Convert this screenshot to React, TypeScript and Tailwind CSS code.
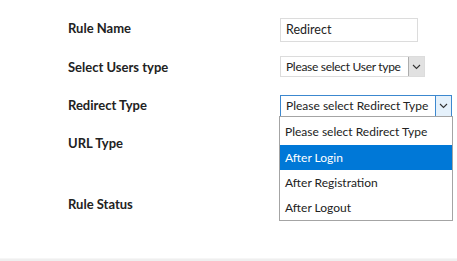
import React from "react";

const options = ["Please select Redirect Type", "After Login", "After Registration", "After Logout"];

function Chevron() {
  return (
    <svg width="9" height="6" viewBox="0 0 9 6" fill="none">
      <path d="M1 1l3.5 3.5L8 1" stroke="#333" strokeWidth="1.1" />
    </svg>
  );
}

export default function App() {
  return (
    <div
      className="relative w-[457px] h-[261px] bg-white text-[13px] text-[#222]"
      style={{ fontFamily: "Lato, 'Noto Sans', sans-serif" }}
    >
      <div className="flex flex-col pt-[18px] pl-[68px]">
        {/* Rule Name */}
        <div className="flex h-[24px]">
          <div className="w-[212px] pt-[1px] font-bold text-[13px] leading-[18px]">Rule Name</div>
          <div className="w-[138px] h-[24px] border border-[#dcdcdc] px-[5px] text-[12.5px] leading-[22px]">
            Redirect
          </div>
        </div>

        {/* Select Users type */}
        <div className="flex h-[20px] mt-[14px]">
          <div className="w-[212px] pt-[2px] font-bold leading-[18px]">Select Users type</div>
          <div className="flex w-[145px] h-[21px] border border-[#dcdcdc] pl-[5px]">
            <span className="flex-1 whitespace-nowrap text-[12px] tracking-[-0.3px] leading-[19px]">
              Please select User type
            </span>
            <span className="flex items-center justify-center w-[16px] h-[19px] bg-[#e1e1e1] border-l border-[#adadad]">
              <Chevron />
            </span>
          </div>
        </div>

        {/* Redirect Type */}
        <div className="flex h-[21px] mt-[19px]">
          <div className="w-[212px] pt-[1px] font-bold leading-[18px]">Redirect Type</div>
          <div className="relative">
            <div className="flex w-[172px] h-[22px] border border-[#3c88cf] pl-[5px]">
              <span className="flex-1 whitespace-nowrap text-[12px] leading-[20px]">Please select Redirect Type</span>
              <span className="flex items-center justify-center w-[16px] h-[20px] bg-[#e5f1fb] border-l border-[#3c88cf]">
                <Chevron />
              </span>
            </div>
            <div className="absolute left-[-1px] top-[21px] z-10 w-[174px] border border-[#a4a4a4] bg-white">
              {options.map((o, i) => (
                <div
                  key={o}
                  className={`pl-[5px] whitespace-nowrap text-[12px] ${
                    i === 0 ? "h-[28px] pt-[2px] leading-[26px]" : "h-[25px] leading-[25px]"
                  } ${i === 1 ? "bg-[#0078d7] text-white" : "text-[#222]"}`}
                >
                  {o}
                </div>
              ))}
            </div>
          </div>
        </div>

        {/* URL Type */}
        <div className="mt-[18px] font-bold leading-[18px]">URL Type</div>

        {/* Rule Status */}
        <div className="mt-[43px] font-bold leading-[18px]">Rule Status</div>
      </div>

      <div className="absolute bottom-0 left-0 right-0 h-[3px] bg-[#efefef] border-t border-[#f6f6f6]" />
    </div>
  );
}
